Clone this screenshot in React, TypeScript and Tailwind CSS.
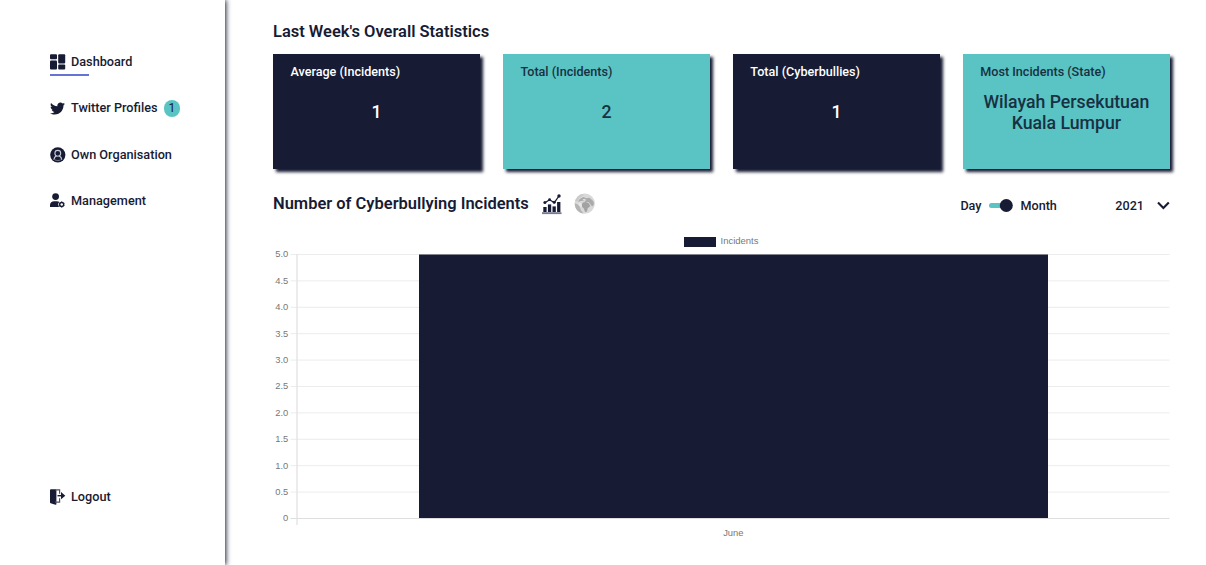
import React from "react";
import { FaTwitter } from "react-icons/fa";

const navy = "#171b33";

function DashboardIcon() {
  return (
    <svg width="16" height="16" viewBox="0 0 16 16" fill={navy}>
      <rect x="0" y="0.3" width="7" height="5" rx="1" />
      <rect x="0" y="6.5" width="7" height="9.1" rx="1" />
      <rect x="8.2" y="0.3" width="7" height="9.1" rx="1" />
      <rect x="8.2" y="10.6" width="7" height="5" rx="1" />
    </svg>
  );
}

function OrganisationIcon() {
  return (
    <svg width="16" height="16" viewBox="0 0 16 16" fill="none">
      <circle cx="7.8" cy="7.8" r="7.6" fill={navy} />
      <circle cx="7.8" cy="6.3" r="2.9" stroke="#c9cbd6" strokeWidth="1.1" />
      <path d="M3.9 12.8c.1-2 1.2-3.3 2.5-3.9M11.7 12.8c-.1-2-1.2-3.3-2.5-3.9" stroke="#c9cbd6" strokeWidth="1.2" />
      <path d="M5 12.9c1.8.8 3.8.8 5.6 0" stroke="#8d91a5" strokeWidth=".8" />
    </svg>
  );
}

function ManagementIcon() {
  return (
    <svg width="16" height="16" viewBox="0 0 16 16" fill={navy}>
      <circle cx="5.6" cy="3.6" r="3.4" />
      <path d="M0 14V12c0-2.400 1.900-3.800 4.200-3.800h2.700c1 0 1.800.2 2.500.7-1 .9-1.500 2.200-.9 3.700l.5 1.400z" />
      <circle cx="11.7" cy="11.5" r="2" fill="none" stroke={navy} strokeWidth="1.4" />
      <path d="M11.1 8.500h1.200v1.200h-1.200zM11.100 13.300h1.200v1.300h-1.200zM8.900 10.400l.6-1 1.100.6-.6 1zM12.800 12.700l.6-1 1.200.6-.6 1zM8.900 12.600l1.200-.6.6 1-1.100.7zM12.800 10.300l1.200-.7.6 1-1.200.7z" />
    </svg>
  );
}

function LogoutIcon() {
  return (
    <svg width="16" height="16" viewBox="0 0 16 16" fill={navy}>
      <path d="M.9.2h4.600L6.400 1v14.400l-1 .3-4.700-1.400a1 1 0 0 1-.7-1V1.100C0 .5.4.2.9.2z" />
      <path d="M5 .8h4.600v4M9.600 9.200v3.900H5" fill="none" stroke="#4d5168" strokeWidth="1.2" />
      <path d="M7.500 6h4v1.400h-4z" />
      <path d="M11 3.100l4.300 3.600-4.300 3.600z" />
    </svg>
  );
}

function ChartIcon() {
  return (
    <svg width="20" height="21" viewBox="0 0 20 21" fill={navy}>
      <rect x="0" y="18.2" width="19.5" height="1.9" fill="#777b90" />
      <rect x="1.3" y="13" width="3.3" height="5" />
      <rect x="5.9" y="10.4" width="3.3" height="7.6" />
      <rect x="10.5" y="12.4" width="3.3" height="5.6" />
      <rect x="15.1" y="8" width="3.3" height="10" />
      <path d="M2.900 8.700l4.700-3 4.700 3 4.700-6.700" fill="none" stroke={navy} strokeWidth="1.3" />
      <circle cx="2.9" cy="8.600" r="1.5" />
      <circle cx="7.6" cy="5.700" r="1.400" />
      <circle cx="12.2" cy="8.300" r="1.5" />
      <circle cx="17" cy="2" r="1.7" />
    </svg>
  );
}

function GlobeIcon() {
  return (
    <svg width="22" height="22" viewBox="0 0 22 22">
      <circle cx="10.8" cy="10.6" r="10.1" fill="#d9d9d9" />
      <path d="M1 8.400C1.800 5 4.500 2 8 1l2 .3-2.400 2.200-2.300 1.600L4 8.200z" fill="#cacaca" />
      <path d="M.7 10.300l3.200 1.200 1.900 2.300 1.300 3.600 2.600 3C5 20.400.7 16.400.7 10.300z" fill="#b4b4b4" />
      <path d="M4 9l1.600-2.800 3.600-2.300 3.400 1.300 2.900-.5 3.900 3.500.5 3.300-1.700 2-2-2.600-1.800-1.800-3-.2-1.700-1.300-3 .4z" fill="#aaa" />
      <path d="M8.400 9.800l3.200-.9 2.900 1.100 1.900 3-2.700 2.200-.7 3.200-1.900.6-1.300-3.600-2.100-2z" fill="#a2a2a2" />
      <path d="M8.300 6.300l2.700-.5 1.400 1.400-2 .8z" fill="#dcdcdc" />
      <path d="M5 9.600l2.200.6.7 3-1.200 1.400-2.300-3z" fill="#e6e6e6" />
    </svg>
  );
}

function NavItem({ icon, label, active, badge }: { icon: React.ReactNode; label: string; active?: boolean; badge?: string }) {
  return (
    <a className="flex h-[26px] flex-col">
      <span className="flex h-[23px] items-center">
        <span className="flex w-[21.5px] shrink-0 items-center">{icon}</span>
        <span className="text-[12.7px] leading-[20px] font-medium whitespace-nowrap">{label}</span>
        {badge && (
          <span className="ml-[6px] flex size-[16.5px] items-center justify-center rounded-full bg-[#5ac3c3] text-[12px]">
            {badge}
          </span>
        )}
      </span>
      {active && <span className="h-[2px] w-[39px] bg-[#6474d2]" />}
    </a>
  );
}

function StatCard({ title, value, teal }: { title: string; value: string; teal?: boolean }) {
  return (
    <div
      className={
        "h-[114.5px] pt-[9px] shadow-[3px_3px_3px_#171b33] " +
        (teal ? "bg-[#5ac3c3] text-[#173142]" : "bg-[#171b33] text-white")
      }
    >
      <h3 className="pl-[17.5px] text-[12.6px] leading-[18px] font-medium">{title}</h3>
      <div className="mt-[10px] flex h-[44px] items-center justify-center px-[16px] text-center text-[17.7px] leading-[21.5px] font-medium">
        {value}
      </div>
    </div>
  );
}

const ticks = ["5.0", "4.5", "4.0", "3.5", "3.0", "2.5", "2.0", "1.5", "1.0", "0.5", "0"];

function IncidentChart() {
  return (
    <svg className="block" width="900" height="320" viewBox="273 230 900 320" fontFamily="Liberation Sans, Arial, sans-serif" fontSize="9.4" fill="#777">
      {ticks.map((t, i) => {
        const y = 254.5 + i * 26.4;
        return (
          <g key={t}>
            <line x1="290.5" x2="1169.5" y1={y} y2={y} stroke={i === 10 ? "#dedede" : "#ececec"} strokeWidth="1" />
            <text x="288.3" y={y + 2.8} textAnchor="end">{t}</text>
          </g>
        );
      })}
      <line x1="297" x2="297" y1="254" y2="525" stroke="#e4e4e4" strokeWidth="1.4" />
      <rect x="419" y="254.5" width="629" height="263.5" fill={navy} />
      <rect x="684" y="237" width="32" height="10" fill={navy} />
      <text x="720.5" y="244.3" textLength="38" lengthAdjust="spacingAndGlyphs">Incidents</text>
      <text x="733.3" y="535.7" textAnchor="middle">June</text>
    </svg>
  );
}

export default function App() {
  return (
    <div className="flex h-[565px] w-[1206px] overflow-hidden bg-white font-['Roboto',sans-serif] text-[#171b33]">
      <aside className="flex w-[225px] shrink-0 flex-col pt-[50.5px] pl-[49.5px] shadow-[1px_0_5px_#171b33]">
        <nav className="flex flex-col gap-[20.3px]">
          <NavItem icon={<DashboardIcon />} label="Dashboard" active />
          <NavItem icon={<FaTwitter size={15} color={navy} />} label="Twitter Profiles" badge="1" />
          <NavItem icon={<OrganisationIcon />} label="Own Organisation" />
          <NavItem icon={<ManagementIcon />} label="Management" />
        </nav>
        <div className="mt-auto mb-[54px]">
          <NavItem icon={<LogoutIcon />} label="Logout" />
        </div>
      </aside>
      <main className="w-[948px] pl-[48px]">
        <h2 className="pt-[20px] text-[16.48px] leading-[24px] font-semibold">Last Week's Overall Statistics</h2>
        <section className="mt-[10px] grid w-[897px] grid-cols-4 gap-[22.7px]">
          <StatCard title="Average (Incidents)" value="1" />
          <StatCard title="Total (Incidents)" value="2" teal />
          <StatCard title="Total (Cyberbullies)" value="1" />
          <StatCard title="Most Incidents (State)" value="Wilayah Persekutuan Kuala Lumpur" teal />
        </section>
        <div className="mt-[20.5px] flex h-[30px] w-[897px] items-center">
          <h2 className="mt-[1px] w-[256px] text-[16.48px] font-semibold whitespace-nowrap">Number of Cyberbullying Incidents</h2>
          <span className="ml-[13px]"><ChartIcon /></span>
          <span className="ml-[12px]"><GlobeIcon /></span>
          <div className="mt-[4px] ml-auto flex items-center text-[12.6px] font-medium">
            <span>Day</span>
            <svg className="mx-[7.5px]" width="24" height="14" viewBox="0 0 24 14">
              <rect x="0" y="4" width="18" height="5" rx="2.5" fill="#5ac3c3" />
              <circle cx="17.3" cy="6.5" r="6.5" fill={navy} />
            </svg>
            <span>Month</span>
            <span className="ml-[58.5px]">2021</span>
            <svg className="ml-[13px]" width="13" height="10" viewBox="0 0 13 10" fill="none">
              <path d="M1 1.5l5.400 5.500L11.800 1.500" stroke={navy} strokeWidth="2.1" />
            </svg>
          </div>
        </div>
        <div className="mt-[11px]">
          <IncidentChart />
        </div>
      </main>
    </div>
  );
}
